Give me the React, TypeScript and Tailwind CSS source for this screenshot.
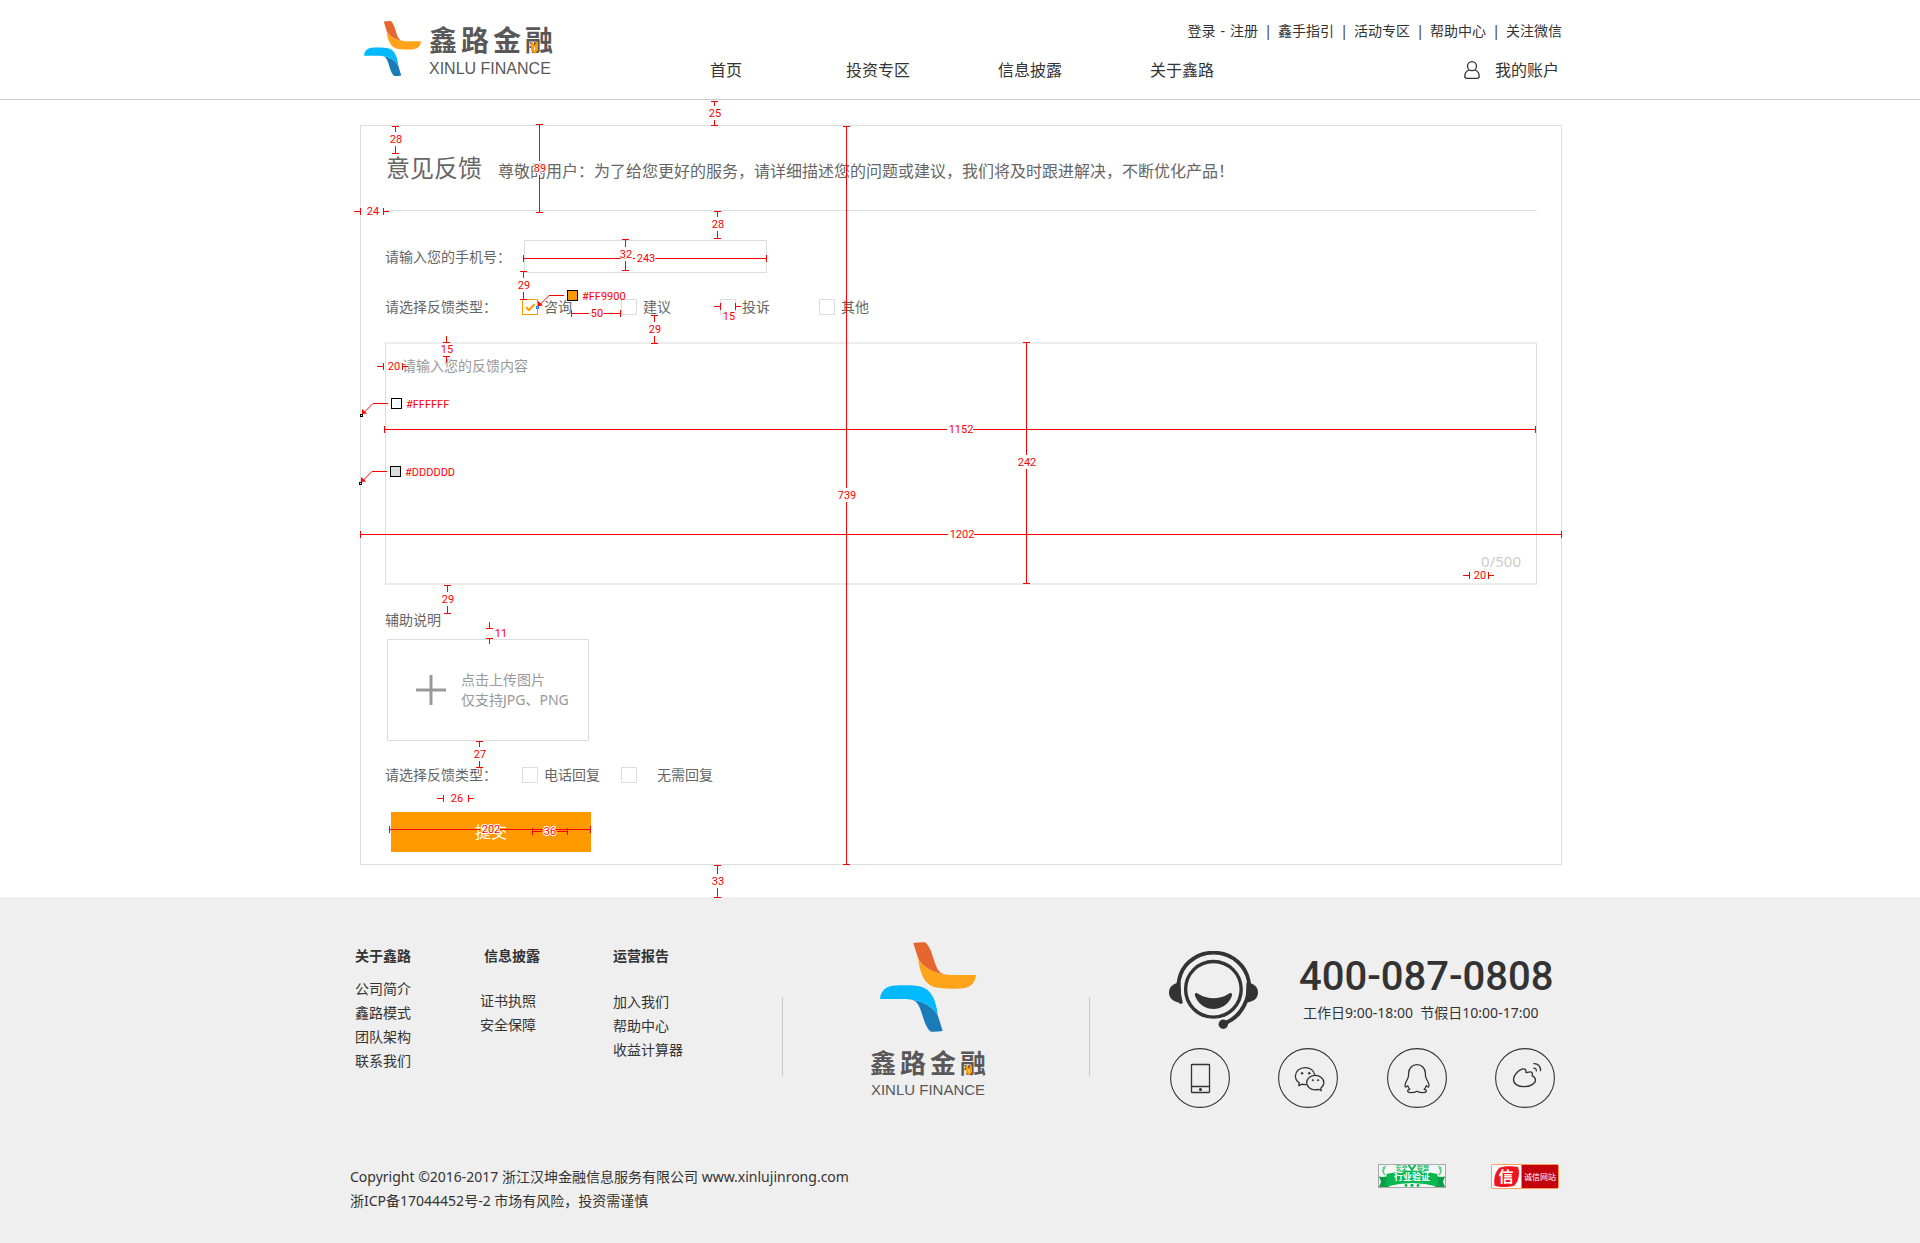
import { useState, type ReactNode } from "react";

const INK = "#333333";

function Mark({ className }: { className: string }) {
  const dark = "M33.3 1Q39 0 45 .2C50 4 52 12 54 18C57 28 60 33 69 33C54 32 42 25 38 16Z";
  const light = "M38 16C40 33 45 42 54 45C62 47 72 46.8 80 46.5C90 46 95 42 96 33L69 33C54 32 42 25 38 16Z";
  return (
    <svg viewBox="0 0 96 90" preserveAspectRatio="none" className={className} aria-hidden="true">
      <path d={dark} fill="#e5662e" />
      <path d={light} fill="#ffa31a" />
      <g transform="rotate(180 48 45)">
        <path d={dark} fill="#1b7ab8" />
        <path d={light} fill="#00b9ff" />
      </g>
    </svg>
  );
}

function Pen({ className }: { className: string }) {
  return (
    <svg viewBox="0 0 6 10" className={className} aria-hidden="true">
      <path d="M0 0h2v2.5h2V0h2v7L3 10 0 7Z" fill="#ff9900" />
      <path d="M3 4v3" stroke="#ffffff" strokeWidth="0.8" />
    </svg>
  );
}

function UserIcon() {
  return (
    <svg viewBox="0 0 16 18" className="h-[18px] w-4" fill="none" stroke={INK} strokeWidth="1.3" strokeLinecap="round" aria-hidden="true">
      <circle cx="8" cy="5.2" r="4.5" />
      <path d="M4.800 9C2.200 10.200.8 12.600.8 15.200c0 1.400.8 2.100 2.200 2.100h10c1.400 0 2.200-.7 2.200-2.100 0-2.600-1.400-5-4-6.200" />
    </svg>
  );
}

function Headset() {
  return (
    <svg viewBox="0 0 89 78" className="h-[78px] w-[89px]" aria-hidden="true">
      <circle cx="44.400" cy="38.300" r="27.800" fill="none" stroke={INK} strokeWidth="3.400" />
      <path d="M11.800 51C6.500 35 10 20 20 11C34-1.500 55-1.500 69 11C80 21 83 36 77.500 49C73.500 60 66 68.500 55 72.500" fill="none" stroke={INK} strokeWidth="3.800" strokeLinecap="round" />
      <path d="M11.500 31.500C4 32 0 36 0 41.500S4 51.500 12.500 51.800Z" fill={INK} />
      <path d="M77.500 31.500C85 32 89 36 89 41.500S85 51 76.500 51.500Z" fill={INK} />
      <circle cx="54.300" cy="73.200" r="4.700" fill={INK} />
      <path d="M26.200 42.400C25.500 43.500 26 44.500 26.500 46C30 54 37 58 44.400 58S59 54 62.500 46C63 44.500 63.300 43.500 62.600 42.400C61.500 41.500 60.500 42.200 58.500 43.500C50 48.500 39 48.500 30.500 43.500C28.500 42.200 27.400 41.500 26.200 42.400Z" fill={INK} />
    </svg>
  );
}

function RoundIcon({ label, children }: { label: string; children: ReactNode }) {
  return (
    <a href="#" aria-label={label} className="block">
      <svg viewBox="0 0 60 60" className="size-[60px]" fill="none" stroke={INK} strokeWidth="1.3" strokeLinecap="round" strokeLinejoin="round" aria-hidden="true">
        <circle cx="30" cy="30" r="29.400" strokeWidth="1.1" />
        {children}
      </svg>
    </a>
  );
}

function SafeBadge() {
  return (
    <svg viewBox="0 0 68 24" className="h-6 w-[68px]" role="img" aria-label="行业验证">
      <rect x="0.500" y="0.500" width="67" height="23" fill="#f6f6f6" stroke="#a9a9a9" />
      <path d="M1 12.500Q5 13.500 10 12V22L12 23H1L3 18Z" fill="#0a9f46" />
      <path d="M67 12.500Q63 13.500 58 12V22L56 23H67L65 18Z" fill="#0a9f46" />
      <path d="M8.500 10Q34 3 59.500 10V22.500Q34 15.500 8.500 22.500Z" fill="#05b850" />
      <path d="M30.500 1l3.500 4.500 3.500-4.500" fill="none" stroke="#05b850" strokeWidth="2" />
      <path d="M8 2C4 4 4 8 7 11M5 3l2 2M4 6l2.500 1M60 2C64 4 64 8 61 11M63 3l-2 2M64 6l-2.500 1" fill="none" stroke="#4cc77f" strokeWidth="1.200" />
      <g fill="#05b850">
        <circle cx="28" cy="21.500" r="1.400" />
        <circle cx="34" cy="21.300" r="1.600" />
        <circle cx="40" cy="21.500" r="1.400" />
      </g>
      <g fontFamily="'Noto Sans CJK SC', sans-serif" textAnchor="middle">
        <text x="23.500" y="6" fontSize="6" fontWeight="500" fill="#05b850">安全</text>
        <text x="45" y="6" fontSize="6" fontWeight="500" fill="#05b850">联盟</text>
        <text x="34" y="16" fontSize="9" fontWeight="700" fill="#ffffff">行业验证</text>
      </g>
    </svg>
  );
}

function TrustBadge() {
  return (
    <svg viewBox="0 0 68 25" className="h-[25px] w-[68px]" role="img" aria-label="诚信网站">
      <rect x="0.500" y="0.500" width="67" height="24" rx="1.500" fill="#ffffff" stroke="#f5a05a" />
      <rect x="30.500" y="1" width="36.500" height="23" fill="#c4000c" />
      <path d="M9 3.500C15 1.500 22 2 27 3C29 8 28 17 23.500 21.500C17 23.500 8 23.500 3.500 21.500C2.500 15 4 7 9 3.500Z" fill="#f0141e" />
      <g fontFamily="'Noto Sans CJK SC', sans-serif" textAnchor="middle" fill="#ffffff">
        <text x="15" y="18" fontSize="15" fontWeight="700">信</text>
        <text x="49" y="15.500" fontSize="8" fontWeight="400">诚信网站</text>
      </g>
    </svg>
  );
}

function Choice({
  label,
  checked,
  onChange,
  wide,
}: {
  label: string;
  checked: boolean;
  onChange: () => void;
  wide?: boolean;
}) {
  return (
    <label className={wide ? "flex items-center gap-5" : "flex items-center gap-1.5"}>
      <span className="relative block size-4">
        <input
          type="checkbox"
          checked={checked}
          onChange={onChange}
          className="block size-4 appearance-none border border-[#dddddd] bg-white checked:border-[#ff9900]"
        />
        {checked && (
          <svg viewBox="0 0 16 16" className="pointer-events-none absolute inset-0 size-4" aria-hidden="true">
            <path d="M4 8.200 7 11 12.500 5.200" fill="none" stroke="#ff9900" strokeWidth="2" />
          </svg>
        )}
      </span>
      <span>{label}</span>
    </label>
  );
}

type Span = { at: number; from: number; to: number; text: string; pos: number; off?: number };

const vertical: Span[] = [
  { at: 714, from: 101, to: 125, text: "25", pos: 113 },
  { at: 395, from: 126, to: 153, text: "28", pos: 139 },
  { at: 539, from: 124, to: 212, text: "89", pos: 168 },
  { at: 717, from: 211, to: 238, text: "28", pos: 224 },
  { at: 625, from: 239, to: 270, text: "32", pos: 254 },
  { at: 523, from: 271, to: 299, text: "29", pos: 285 },
  { at: 654, from: 315, to: 343, text: "29", pos: 329 },
  { at: 846, from: 126, to: 864, text: "739", pos: 495 },
  { at: 1026, from: 342, to: 583, text: "242", pos: 462 },
  { at: 447, from: 585, to: 613, text: "29", pos: 599 },
  { at: 479, from: 741, to: 767, text: "27", pos: 754 },
  { at: 717, from: 865, to: 897, text: "33", pos: 881 },
];

const horizontal: Span[] = [
  { at: 258, from: 523, to: 766, text: "243", pos: 645 },
  { at: 313, from: 571, to: 620, text: "50", pos: 596 },
  { at: 429, from: 384, to: 1535, text: "1152", pos: 960 },
  { at: 534, from: 360, to: 1561, text: "1202", pos: 961 },
  { at: 829, from: 389, to: 590, text: "202", pos: 490 },
  { at: 831, from: 532, to: 567, text: "36", pos: 549 },
];

const outerHorizontal: Span[] = [
  { at: 211, from: 360, to: 383, text: "24", pos: 372 },
  { at: 306, from: 720, to: 735, text: "15", pos: 728, off: 10 },
  { at: 366, from: 383, to: 402, text: "20", pos: 393 },
  { at: 575, from: 1469, to: 1488, text: "20", pos: 1479 },
  { at: 798, from: 443, to: 468, text: "26", pos: 456 },
];

const outerVertical: Span[] = [
  { at: 446, from: 342, to: 356, text: "15", pos: 349 },
  { at: 489, from: 628, to: 638, text: "11", pos: 633, off: 11 },
];

const swatches = [
  { x: 567, y: 290, fill: "#ff9900", text: "#FF9900", tx: 539, ty: 305, dot: "#1677ff" },
  { x: 391, y: 398, fill: "#ffffff", text: "#FFFFFF", tx: 363, ty: 413, dot: "#000000" },
  { x: 390, y: 466, fill: "#dddddd", text: "#DDDDDD", tx: 362, ty: 481, dot: "#000000" },
];

function Dimensions() {
  const lines = [
    ...vertical.map((s) => `M${s.at - 3} ${s.from}.5h7M${s.at - 3} ${s.to}.5h7M${s.at}.5 ${s.from}V${s.pos - 7}M${s.at}.5 ${s.pos + 7}V${s.to}`),
    ...horizontal.map((s) => {
      const half = s.text.length * 3 + 1;
      return `M${s.from}.5 ${s.at - 3}v7M${s.to}.5 ${s.at - 3}v7M${s.from} ${s.at}.5H${s.pos - half}M${s.pos + half} ${s.at}.5H${s.to}`;
    }),
    ...outerHorizontal.map((s) => `M${s.from}.5 ${s.at - 3}v7M${s.to}.5 ${s.at - 3}v7M${s.from} ${s.at}.5h-6M${s.to} ${s.at}.5h6`),
    ...outerVertical.map((s) => `M${s.at - 3} ${s.from}.5h7M${s.at - 3} ${s.to}.5h7M${s.at}.5 ${s.from}v-6M${s.at}.5 ${s.to}v6`),
  ].join("");
  const labels = [
    ...[...vertical, ...outerVertical].map((s) => ({ x: s.at + (s.off ?? 0), y: s.pos, text: s.text })),
    ...[...horizontal, ...outerHorizontal].map((s) => ({ x: s.pos, y: s.at + (s.off ?? 0), text: s.text })),
  ];
  return (
    <svg
      viewBox="350 0 1220 910"
      width="1220"
      height="910"
      className="pointer-events-none absolute top-0 left-0 max-w-none"
      fontFamily="Roboto, sans-serif"
      fontSize="11"
      fontWeight="400"
    >
      <path d={lines} stroke="#ff0000" strokeWidth="1" fill="none" shapeRendering="crispEdges" />
      {swatches.map((s) => (
        <g key={s.text}>
          <path d={`M${s.x - 3} ${s.y + 5}.5H${s.tx + 10}L${s.tx} ${s.ty}.5`} fill="none" stroke="#ff0000" />
          <path d={`M${s.tx - 1} ${s.ty + 1}v-5l5 4.500Z`} fill="#ff0000" />
          <rect x={s.tx - 2.5} y={s.ty + 1.5} width="2" height="2" fill="#ffffff" stroke={s.dot} shapeRendering="crispEdges" />
          <rect x={s.x + 0.5} y={s.y + 0.5} width="10" height="10" fill={s.fill} stroke="#000000" />
          <text x={s.x + 15} y={s.y + 10} fill="#ff0000">{s.text}</text>
        </g>
      ))}
      {labels.map((l) => (
        <text key={`${l.x}-${l.y}`} x={l.x + 1} y={l.y + 4} textAnchor="middle" fill="#ff0000" stroke="#ffffff" strokeWidth="2" paintOrder="stroke">
          {l.text}
        </text>
      ))}
    </svg>
  );
}

const quickLinks = ["鑫手指引", "活动专区", "帮助中心", "关注微信"];
const navItems = ["首页", "投资专区", "信息披露", "关于鑫路"];

function Header() {
  return (
    <header className="border-b border-[#cccccc]">
      <div className="mx-auto flex max-w-[1220px] justify-between pr-2 pb-[17px] pl-3.5">
        <a href="#" className="flex gap-2 pt-[21px] text-[#595757]">
          <Mark className="h-[55px] w-[57px]" />
          <span className="block pt-[5px]">
            <span className="relative flex gap-1 text-[28px] leading-7 font-bold">
              <span>鑫</span>
              <span>路</span>
              <span>金</span>
              <span>融</span>
              <Pen className="absolute right-[15px] bottom-0 h-3 w-[7px]" />
            </span>
            <span className="mt-[5px] block font-['Liberation_Sans',sans-serif] text-base leading-5">XINLU FINANCE</span>
          </span>
        </a>
        <div className="flex flex-col gap-[17px] pt-[21px]">
          <div className="flex justify-end leading-5">
            <a href="#">登录</a>
            <span className="mx-[5px]">-</span>
            <a href="#">注册</a>
            {quickLinks.map((item) => (
              <span key={item} className="flex">
                <span className="w-5 text-center">|</span>
                <a href="#">{item}</a>
              </span>
            ))}
          </div>
          <div className="flex items-center gap-[206px] text-base leading-6">
            <nav className="flex">
              {navItems.map((item) => (
                <a key={item} href="#" className="w-[152px] text-center">
                  {item}
                </a>
              ))}
            </nav>
            <a href="#" className="flex items-center gap-[15px] pr-[3px]">
              <UserIcon />
              我的账户
            </a>
          </div>
        </div>
      </div>
    </header>
  );
}

function FeedbackForm() {
  const [kinds, setKinds] = useState<string[]>(["咨询"]);
  const [reply, setReply] = useState<string[]>([]);
  const flip = (list: string[], item: string) =>
    list.includes(item) ? list.filter((i) => i !== item) : [...list, item];

  return (
    <main className="mx-auto max-w-[1220px] pt-[25px] pr-2 pb-8 pl-2.5 text-[#666666]">
      <form className="border border-[#dddddd] px-6 pb-3 leading-5" onSubmit={(e) => e.preventDefault()}>
        <div className="flex items-baseline gap-4 border-b border-[#dddddd] py-[26px] pl-px">
          <h1 className="text-2xl leading-8">意见反馈</h1>
          <p className="text-base leading-6">
            尊敬的用户：为了给您更好的服务，请详细描述您的问题或建议，我们将及时跟进解决，不断优化产品！
          </p>
        </div>

        <div className="mt-[29px] flex items-center">
          <label htmlFor="phone" className="w-[139px]">
            请输入您的手机号：
          </label>
          <input id="phone" type="tel" className="h-[33px] w-[243px] border border-[#dddddd] px-2 outline-none" />
        </div>

        <fieldset className="mt-6 flex items-center">
          <span className="w-[137px]">请选择反馈类型：</span>
          <div className="flex gap-[49px]">
            {["咨询", "建议", "投诉", "其他"].map((k) => (
              <Choice key={k} label={k} checked={kinds.includes(k)} onChange={() => setKinds(flip(kinds, k))} />
            ))}
          </div>
        </fieldset>

        <div className="relative mt-[25px]">
          <textarea
            aria-label="反馈内容"
            placeholder="请输入您的反馈内容"
            maxLength={500}
            className="block h-[243px] w-full resize-none border-x border-y-2 border-x-[#dddddd] border-y-[#ececec] px-4 py-3 outline-none placeholder:text-[#999999]"
          />
          <span className="absolute right-4 bottom-3.5 text-[15px] text-[#cccccc]">0/500</span>
        </div>

        <p className="mt-[25px]">辅助说明</p>
        <label className="mt-[9px] ml-0.5 flex h-[102px] w-[202px] items-center gap-[15px] border border-[#dddddd] pl-7 text-[#999999]">
          <svg viewBox="0 0 30 30" className="size-[30px]" aria-hidden="true">
            <path d="M15 0v30M0 15h30" stroke="#999999" strokeWidth="3" />
          </svg>
          <span>
            点击上传图片
            <br />
            仅支持JPG、PNG
          </span>
          <input type="file" accept=".jpg,.png" className="sr-only" />
        </label>

        <fieldset className="mt-6 flex items-center">
          <span className="w-[137px]">请选择反馈类型：</span>
          <div className="flex gap-[21px]">
            <Choice label="电话回复" checked={reply.includes("电话回复")} onChange={() => setReply(flip(reply, "电话回复"))} />
            <Choice wide label="无需回复" checked={reply.includes("无需回复")} onChange={() => setReply(flip(reply, "无需回复"))} />
          </div>
        </fieldset>

        <button type="submit" className="mt-[27px] ml-1.5 block h-10 w-[200px] bg-[#ff9900] text-base text-white">
          提交
        </button>
      </form>
    </main>
  );
}

function LinkList({ items, className }: { items: string[]; className: string }) {
  return (
    <ul className={className}>
      {items.map((item) => (
        <li key={item}>
          <a href="#">{item}</a>
        </li>
      ))}
    </ul>
  );
}

function Footer() {
  return (
    <footer className="bg-[#efefef]">
      <div className="mx-auto max-w-[1220px] pt-[45px] pb-[30px]">
        <div className="flex items-start">
          <div className="flex w-[432px] pt-1 pl-[5px]">
            <div className="w-[125px]">
              <h2 className="leading-5 font-bold">关于鑫路</h2>
              <LinkList items={["公司简介", "鑫路模式", "团队架构", "联系我们"]} className="mt-[11px] leading-6" />
            </div>
            <div className="w-[133px]">
              <h2 className="pl-1 leading-5 font-bold">信息披露</h2>
              <LinkList items={["证书执照", "安全保障"]} className="mt-[23px] leading-6" />
            </div>
            <div>
              <h2 className="leading-5 font-bold">运营报告</h2>
              <LinkList items={["加入我们", "帮助中心", "收益计算器"]} className="mt-6 leading-6" />
            </div>
          </div>
          <div className="mt-[55px] h-[79px] w-px bg-[#c8c8c8]" />
          <div className="flex w-[306px] flex-col items-center pr-4 text-[#595757]">
            <Mark className="h-[90px] w-24" />
            <div className="relative mt-[18px] flex gap-1 text-[26px] leading-[26px] font-bold">
              <span>鑫</span>
              <span>路</span>
              <span>金</span>
              <span>融</span>
              <Pen className="absolute right-3.5 bottom-0 h-[11px] w-1.5" />
            </div>
            <div className="mt-1 font-['Liberation_Sans',sans-serif] text-[15px] leading-5">XINLU FINANCE</div>
          </div>
          <div className="mt-[55px] h-[79px] w-px bg-[#c8c8c8]" />
          <div className="ml-[79px] pt-[9px]">
            <div className="flex">
              <Headset />
              <div className="ml-[41px] pt-1.5">
                <div className="font-[Roboto,sans-serif] text-[40px] leading-10 font-medium">400-087-0808</div>
                <div className="mt-1.5 ml-1 leading-5 whitespace-pre">工作日9:00-18:00  节假日10:00-17:00</div>
              </div>
            </div>
            <div className="mt-[19px] ml-px flex w-[385px] justify-between">
              <RoundIcon label="手机客户端">
                <rect x="21.500" y="16.500" width="18" height="28" rx="0.500" />
                <path d="M21.500 38.500h18" />
                <circle cx="30.500" cy="41.500" r="0.900" fill={INK} />
              </RoundIcon>
              <RoundIcon label="微信">
                <path d="M28 36.500C26.500 36.800 25 36.600 24 36.200L20.800 37.700 21.300 34.800C18.800 33.200 17.400 30.800 17.400 28C17.400 23.200 21.800 19.600 27.200 19.600C32 19.600 35.800 22.600 36.800 26.800" />
                <path d="M37.200 27.300C32.500 27.300 28.700 30.600 28.700 34.600S32.500 41.800 37.200 41.800C38.400 41.800 39.400 41.600 40.400 41.300L43.200 42.800 42.800 40.200C44.600 38.900 45.800 36.900 45.800 34.600C45.800 30.600 42 27.300 37.200 27.300Z" />
                <g fill={INK} strokeWidth="0.500">
                  <circle cx="24" cy="25.300" r="1" />
                  <circle cx="31.200" cy="25.300" r="1" />
                  <circle cx="34.800" cy="32.200" r="0.800" />
                  <circle cx="40" cy="32.200" r="0.800" />
                </g>
              </RoundIcon>
              <RoundIcon label="QQ">
                <path d="M30 16.700C25 16.700 21.600 20.500 21.600 25.500C21.600 28.500 21.800 29 20.300 31.500C18.500 34.500 17.400 37.500 18.400 39C19.200 39.300 20 38.300 20.700 37.600C21.200 39.400 21.800 40.400 22.800 41.300C21 41.800 20.300 42.600 20.700 43.500C21.500 45.200 28 45 30 43.300C32 45 38.500 45.200 39.300 43.500C39.700 42.600 39 41.800 37.200 41.300C38.200 40.400 38.800 39.400 39.300 37.600C40 38.300 40.800 39.300 41.600 39C42.600 37.500 41.500 34.500 39.700 31.500C38.200 29 38.400 28.500 38.400 25.500C38.400 20.500 35 16.700 30 16.700Z" />
              </RoundIcon>
              <RoundIcon label="微博">
                <path d="M31 24.700C31.300 22.300 30.300 20.500 27.900 20.900C23.800 21.600 18.500 26.800 18.500 31.500C18.500 36.300 23.500 38.700 29 38.700C35.500 38.700 40.500 35.300 40.500 31.900C40.500 29.800 39.300 28.900 37 27.700C37.800 25.800 37.400 24.600 36.300 24.100C34.800 23.400 33 24.300 31 24.700Z" />
                <path d="M38.800 15.600C42.800 15.300 46 18.500 45.500 22.700M38.800 20.200C40.600 20.200 41.500 21.200 41.300 22.800" />
              </RoundIcon>
            </div>
          </div>
        </div>
        <div className="mt-[57px] flex items-start justify-between pr-[11px]">
          <p className="leading-6">
            Copyright ©2016-2017 浙江汉坤金融信息服务有限公司 www.xinlujinrong.com
            <br />
            浙ICP备17044452号-2 市场有风险，投资需谨慎
          </p>
          <div className="-mt-px flex gap-[45px]">
            <SafeBadge />
            <TrustBadge />
          </div>
        </div>
      </div>
    </footer>
  );
}

export default function App() {
  return (
    <div className="min-h-screen bg-white font-['Noto_Sans','Noto_Sans_CJK_SC',sans-serif] text-sm font-normal text-[#333333]">
      <div className="relative">
        <Header />
        <FeedbackForm />
        <Footer />
        <div className="pointer-events-none absolute inset-x-0 top-0 mx-auto max-w-[1220px]">
          <Dimensions />
        </div>
      </div>
    </div>
  );
}
